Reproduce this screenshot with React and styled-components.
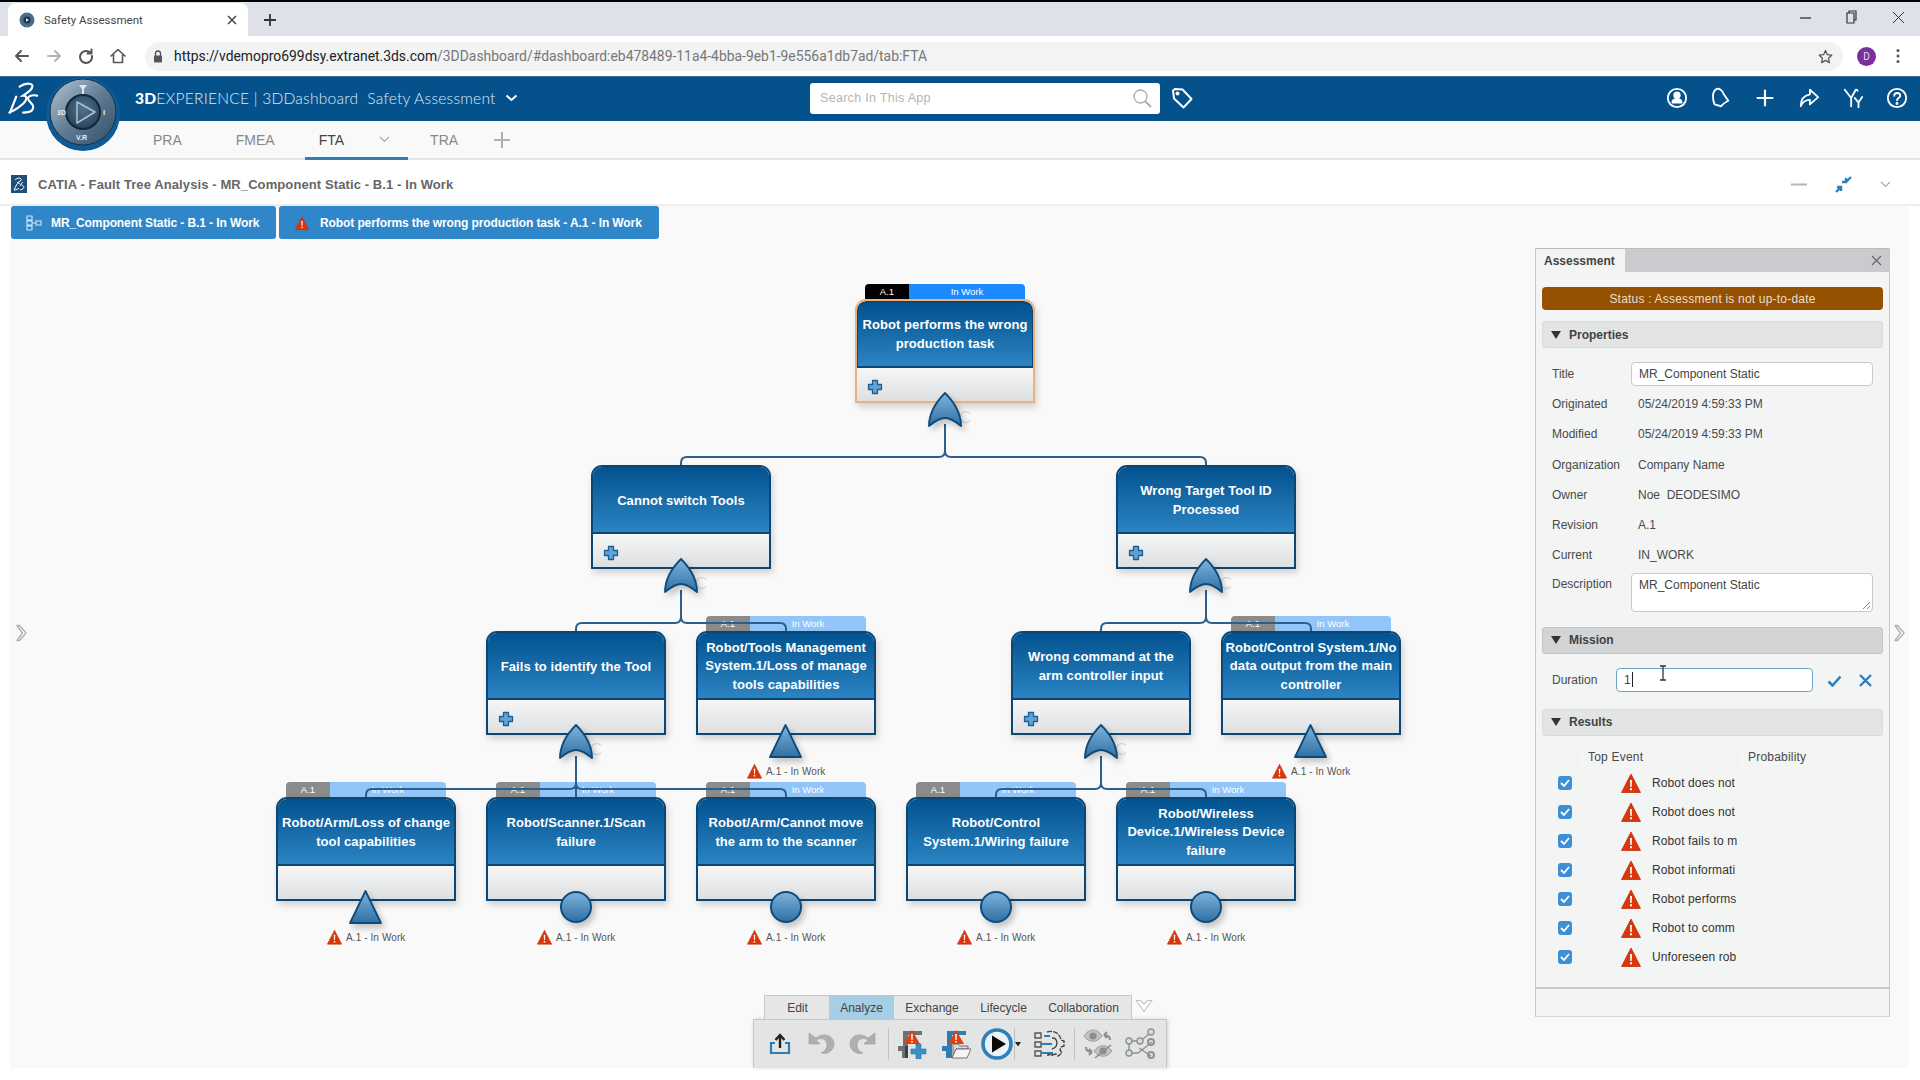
import React from "react";
import styled, { createGlobalStyle } from "styled-components";

const Global = createGlobalStyle`
  html, body { margin: 0; padding: 0; background: #fff; }
  body { font-family: "Liberation Sans", Arial, sans-serif; overflow: hidden; }
  #root { width: 1920px; height: 1080px; }
  * { box-sizing: border-box; }
`;

const Page = styled.div`
  width: 1920px; height: 1080px; display: flex; flex-direction: column; background: #fff; border-top: 2px solid #000; position: relative; overflow: hidden;
`;

/* Browser chrome */
const TabStrip = styled.div`
  height: 34px; background: #dee1e9; display: flex; align-items: stretch; padding: 1px 0 0 8px; position: relative;
`;
const BrowserTab = styled.div`
  width: 240px; background: #fff; border-radius: 8px 8px 0 0; display: flex; align-items: center; padding: 0 10px 0 11px; gap: 9px;
  font: 11.5px Roboto, sans-serif; color: #444;
`;
const TabTitle = styled.span`flex: 1;`;
const NewTab = styled.div`width: 44px; display: flex; align-items: center; justify-content: center; color: #333;`;
const WinControls = styled.div`
  margin-left: auto; display: flex; align-items: center; height: 28px; gap: 35px; padding-right: 15px; color: #333;
`;
const AddressRow = styled.div`
  height: 40px; background: #fff; display: flex; align-items: center; padding: 0 14px 0 14px;
`;
const NavIcons = styled.div`display: flex; gap: 16px; width: 131px; align-items: center; color: #555;`;
const Omnibox = styled.div`
  width: 1698px; height: 29px; border-radius: 15px; background: #f1f3f4; display: flex; align-items: center; padding: 0 10px 0 8px; gap: 8px;
  font: 13.9px Roboto, sans-serif; color: #777; white-space: nowrap;
`;
const UrlHost = styled.span`color: #222;`;
const Url = styled.div`flex: 1; margin-left: 3px;`;
const Avatar = styled.div`
  width: 19px; height: 19px; border-radius: 50%; background: #7b2f9f; color: #ddd; font: 10px Roboto, sans-serif; display: flex; align-items: center; justify-content: center; margin-left: 14px; flex: none;
`;
const Dots = styled.div`margin-left: 20px; display: flex; color: #555;`;

/* 3DX header */
const AppHeader = styled.div`
  height: 45px; background: #04518c; border-top: 1px solid #3a6d94; display: flex; align-items: center; padding: 0 12px 2px 135px; position: relative; color: #fff;
`;
const AppTitle = styled.div`
  width: 675px; font: 300 15.6px Lato, sans-serif; letter-spacing: .22px; color: #dfeaf3; white-space: nowrap; display: flex; align-items: center; gap: 9px;
`;
const Bold3D = styled.b`color: #fff; font-weight: 900;`;
const SearchBox = styled.div`
  width: 350px; height: 31px; border-radius: 3px; background: #fff; display: flex; align-items: center; justify-content: space-between; padding: 0 8px 0 10px;
  font: 12.5px "Liberation Sans", sans-serif; letter-spacing: .3px; color: #b5b5b5; flex: none;
`;
const TagWrap = styled.div`margin-left: 11px; display: flex;`;
const HeaderIcons = styled.div`margin-left: auto; display: flex; gap: 22px; align-items: center;`;
const LogoMark = styled.div`position: absolute; left: 6px; top: 5px;`;
const Compass = styled.svg`position: absolute; left: 45px; top: -1px; z-index: 5;`;

const TabBar = styled.div`
  height: 39px; background: #f9f9f9; border-bottom: 2px solid #e4e4e4; display: flex; align-items: center; padding-left: 153px; font: 14px "Liberation Sans", sans-serif; color: #808080;
`;
const AppTab = styled.div`
  margin-right: ${p => p.$mr}px; height: 39px; display: flex; align-items: center; position: relative;
  color: ${p => (p.$active ? "#444" : "#888")};
  ${p => p.$active && `&::after { content: ""; position: absolute; left: -14px; width: 103px; bottom: -1px; height: 3px; background: #2f7fb8; }`}
`;
const TabChevron = styled.div`width: 86px; padding-right: 6px; display: flex; justify-content: center;`;

const TitleRow = styled.div`
  height: 46px; display: flex; align-items: center; padding: 4px 11px 0; gap: 11px; background: #fff; border-bottom: 2px solid #eee;
`;
const TitleText = styled.div`font: bold 13px "Liberation Sans", sans-serif; color: #666; letter-spacing: .1px; flex: 1; white-space: nowrap;`;
const TitleActions = styled.div`display: flex; gap: 28px; align-items: center; padding-right: 18px;`;

const Workspace = styled.div`
  width: 1899px; margin-left: 10px; height: 862px; background: #f9f9f9; display: flex; position: relative;
`;
const CanvasArea = styled.div`flex: 1; display: flex; flex-direction: column; min-width: 0;`;
const Crumbs = styled.div`display: flex; gap: 3px; padding-left: 1px; height: 33px; flex: none;`;
const Crumb = styled.div`
  height: 33px; width: ${p => p.$w}px; background: #2f86c9; border-radius: 3px; color: #fff; font: bold 12px "Liberation Sans", sans-serif; letter-spacing: -.1px;
  display: flex; align-items: center; padding-left: ${p => p.$pl}px; gap: ${p => p.$gap}px; white-space: nowrap;
`;
const Diagram = styled.div`flex: 1; position: relative;`;
const Wires = styled.svg`position: absolute; left: 0; top: 0; z-index: 2;`;
const SideArrow = styled.svg`position: absolute; top: 418px; z-index: 4; left: ${p => p.$x}px;`;

const Tag = styled.div`
  position: absolute; left: ${p => p.$x}px; top: ${p => p.$y}px; width: 160px; height: 15px; display: flex; z-index: 1; border-radius: 4px 4px 0 0; overflow: hidden;
  font: 9.5px "Liberation Sans", sans-serif; color: #fff; line-height: 15px; text-align: center;
`;
const TagRev = styled.div`width: 44px; background: ${p => (p.$on ? "#000" : "#8b8b8b")};`;
const TagState = styled.div`flex: 1; background: ${p => (p.$on ? "#1a8cff" : "#92c6fb")};`;

const Node = styled.div`
  position: absolute; left: ${p => p.$x}px; top: ${p => p.$y}px; width: 180px; height: 104px; z-index: 3; display: flex; flex-direction: column; overflow: hidden;
  border: 2px solid ${p => (p.$hot ? "#e8b383" : "#0c4673")}; border-radius: 11px 11px 0 0;
  box-shadow: 2px 4px 7px rgba(0,0,0,.16);
`;
const NodeTitle = styled.div`
  height: 67px; flex: none; background: linear-gradient(#02528f, #2c84c2); border-bottom: 2px solid #0c4673; color: #fff;
  font: bold 13px/18.5px "Liberation Sans", sans-serif; letter-spacing: .08px; display: flex; align-items: center; justify-content: center; text-align: center; padding: ${p => (p.$single ? 4 : 2)}px 2px 0;
  ${p => p.$hot && "border-top: 2px solid #0c4673; border-left: 1px solid #0c4673; border-right: 1px solid #0c4673; border-radius: 9px 9px 0 0; padding-top: 0;"}
`;
const NodeFoot = styled.div`flex: 1; background: linear-gradient(#f6f6f6, #dddfe1); padding: 11px 0 0 10px;`;
const Symbol = styled.svg`
  position: absolute; left: ${p => p.$x}px; top: ${p => p.$y}px; z-index: 4; overflow: visible; filter: drop-shadow(3px 4px 3px rgba(0,0,0,.22));
`;
const Spinner = styled.svg`position: absolute; left: ${p => p.$x}px; top: ${p => p.$y}px; z-index: 2;`;
const NodeStatus = styled.div`
  position: absolute; left: ${p => p.$x}px; top: ${p => p.$y}px; z-index: 4; display: flex; align-items: center; gap: 4px;
  font: 10px "Liberation Sans", sans-serif; letter-spacing: .1px; color: #555; white-space: nowrap;
`;

/* Bottom toolbar */
const ActionBar = styled.div`
  position: absolute; left: 743px; bottom: 0; z-index: 6; display: flex; flex-direction: column; align-items: flex-start;
`;
const ActionTabs = styled.div`
  margin-left: 11px; width: 368px; height: 24px; background: #e5e6e6; border: 1px solid #c4c6c8; border-bottom: none; display: flex; padding-left: 1px; position: relative;
  font: 12px "Liberation Sans", sans-serif; color: #444;
`;
const ActionTab = styled.div`
  width: ${p => p.$w}px; display: flex; align-items: center; justify-content: center; background: ${p => (p.$on ? "#a6cee4" : "transparent")};
`;
const ActionChevron = styled.svg`position: absolute; right: -23px; top: 3px;`;
const ActionTools = styled.div`
  width: 414px; height: 49px; background: #e3e4e4; border: 1px solid #c4c6c8; border-bottom: none; box-shadow: 1px 0 4px rgba(0,0,0,.16);
  display: flex; align-items: center; padding-left: 15px;
`;
const ToolIcon = styled.svg`flex: none; margin-right: ${p => p.$mr || 0}px;`;
const ToolSep = styled.div`width: 1px; height: 32px; background: #bfc1c3; flex: none; margin-right: ${p => p.$mr}px;`;

/* Panel */
const Panel = styled.div`
  width: 355px; margin: 42px 19px 0 0; height: 769px; flex: none; border-left: 1px solid #c8c8c8; border-right: 1px solid #c8c8c8; border-bottom: 1px solid #d6d6d6;
  background: #f3f4f4; display: flex; flex-direction: column; font: 12px "Liberation Sans", sans-serif; color: #4a4a4a;
`;
const PanelMain = styled.div`height: 741px; border-bottom: 2px solid #c8c9ca; flex: none; display: flex; flex-direction: column;`;
const PanelHead = styled.div`height: 24px; flex: none; background: #c9cbce; display: flex; align-items: stretch; justify-content: space-between; border-top: 1px solid #bbb;`;
const PanelTab = styled.div`width: 89px; background: #f3f4f4; font-weight: bold; color: #444; display: flex; align-items: center; padding-left: 8px;`;
const PanelClose = styled.div`display: flex; align-items: center; padding-right: 7px;`;
const Status = styled.div`
  height: 23px; margin: 15px 6px 0; background: #955000; border-radius: 4px; color: #eadfce; display: flex; align-items: center; justify-content: center; flex: none; letter-spacing: .2px;
`;
const Section = styled.div`
  height: 27px; flex: none; margin: ${p => p.$mt}px 6px 0; background: ${p => (p.$dark ? "#d2d4d5" : "#e3e5e5")}; border: 1px solid ${p => (p.$dark ? "#c3c5c6" : "#dadcdc")}; border-radius: 3px;
  display: flex; align-items: center; gap: 8px; padding-left: 8px; font-weight: bold; color: #3f4347;
`;
const Triangle = styled.span`width: 0; height: 0; border-left: 5px solid transparent; border-right: 5px solid transparent; border-top: 8px solid #333;`;
const Fields = styled.div`padding: 11px 0 0 16px; flex: none;`;
const FieldRow = styled.div`height: 30.2px; display: flex; align-items: ${p => (p.$top ? "flex-start" : "center")}; ${p => p.$top && "padding-top: 7px;"}`;
const FieldName = styled.div`width: 86px; flex: none;`;
const FieldBox = styled.div`
  width: 242px; height: ${p => p.$h}px; margin-left: -7px; padding: ${p => p.$pt}px 7px 0; background: #fff; border: 1px solid #c9c9c9; border-radius: 4px; color: #444; position: relative; ${p => p.$pull && "margin-top: -4px;"}
`;
const Grip = styled.svg`position: absolute; right: 1px; bottom: 1px;`;
const DurationRow = styled.div`height: 24px; margin: 14px 0 0 16px; display: flex; align-items: center; flex: none; position: relative;`;
const DurationName = styled.div`width: 64px;`;
const DurationBox = styled.div`
  width: 197px; height: 24px; background: #fff; border: 1px solid #6aa5c9; border-radius: 4px; display: flex; align-items: center; padding-left: 7px; color: #444;
`;
const Caret = styled.span`width: 1px; height: 15px; background: #222; margin-left: 1px;`;
const Beam = styled.svg`position: absolute; left: 107px; top: -3px;`;
const DurationActions = styled.div`display: flex; gap: 17px; margin-left: 14px; align-items: center; padding-top: 2px;`;
const ResultHead = styled.div`height: 24px; margin: 9px 0 0 46px; display: flex; align-items: center; flex: none; letter-spacing: .2px;`;
const ResultCol = styled.div`width: ${p => p.$w}px; height: 24px; border-left: 1px solid #f9f9f9; padding-left: 5px; display: flex; align-items: center;`;
const ResultRow = styled.div`height: 29px; display: flex; align-items: center; flex: none; padding-left: 22px;`;
const Check = styled.div`width: 14px; height: 14px; border-radius: 3px; background: #3d8fd6; display: flex; align-items: center; justify-content: center; flex: none; margin-right: 49px;`;
const ResultText = styled.div`width: 86px; margin-left: 11px; overflow: hidden; white-space: nowrap; color: #333; letter-spacing: .12px;`;
const Results = styled.div`flex: none;`;

/* Drawings */
const Warn = ({ w = 15, h = 16 }) => (
  <svg width={w} height={h} viewBox="0 0 20 20" style={{ flex: "none" }}>
    <path d="M10 1 L19.5 19.5 H.5 Z" fill="#d9360c" stroke="#c42f08" strokeWidth=".8" strokeLinejoin="round" />
    <path d="M9 7h2l-.3 7h-1.4z M9 15.2h2v2h-2z" fill="#fff" />
  </svg>
);
const PlusMark = () => (
  <svg width="16" height="16" viewBox="0 0 16 16" style={{ display: "block" }}>
    <path d="M5.5 1.5h5v4h4v5h-4v4h-5v-4h-4v-5h4z" fill="#5fa3d6" stroke="#1d5f92" strokeWidth="1.3" strokeLinejoin="round" />
  </svg>
);
const Grad = ({ id }) => (
  <linearGradient id={id} x1="0" x2="0" y1="0" y2="1">
    <stop offset="0" stopColor="#7db4dd" /><stop offset="1" stopColor="#2f6fa4" />
  </linearGradient>
);
const symbolPath = {
  or: "M16 0 C24 8 32 20 32 33 C26 28 21 25 16 25 C11 25 6 28 0 33 C0 20 8 8 16 0 Z",
  tri: "M15.5 0 L31 32 H0 Z",
};
const Gate = ({ kind, x, y }) => (
  <Symbol $x={x} $y={y} width="32" height="33" viewBox="0 0 32 33">
    <defs><Grad id={`g${kind}${x}${y}`} /></defs>
    {kind === "circle"
      ? <circle cx="16" cy="16" r="15" fill={`url(#g${kind}${x}${y})`} stroke="#0e4a7a" strokeWidth="2" />
      : <path d={symbolPath[kind]} fill={`url(#g${kind}${x}${y})`} stroke="#0e4a7a" strokeWidth="1.8" strokeLinejoin="round" />}
  </Symbol>
);

const OX = 10, OY = 240;
const nodes = [
  { x: 855, y: 300, t: "Robot performs the wrong production task", hot: true, plus: true, tag: true, on: true, gate: "or" },
  { x: 591, y: 466, t: "Cannot switch Tools", plus: true, gate: "or", single: true },
  { x: 1116, y: 466, t: "Wrong Target Tool ID Processed", plus: true, gate: "or" },
  { x: 486, y: 632, t: "Fails to identify the Tool", plus: true, gate: "or", single: true },
  { x: 696, y: 632, t: "Robot/Tools Management System.1/Loss of manage tools capabilities", tag: true, gate: "tri", st: true },
  { x: 1011, y: 632, t: "Wrong command at the arm\u00a0controller\u00a0input", plus: true, gate: "or" },
  { x: 1221, y: 632, t: "Robot/Control System.1/No data output from the main controller", tag: true, gate: "tri", st: true },
  { x: 276, y: 798, t: "Robot/Arm/Loss of change tool capabilities", tag: true, gate: "tri", st: true },
  { x: 486, y: 798, t: "Robot/Scanner.1/Scan failure", tag: true, gate: "circle", st: true },
  { x: 696, y: 798, t: "Robot/Arm/Cannot move the arm to the scanner", tag: true, gate: "circle", st: true },
  { x: 906, y: 798, t: "Robot/Control System.1/Wiring failure", tag: true, gate: "circle", st: true },
  { x: 1116, y: 798, t: "Robot/Wireless Device.1/Wireless Device failure", tag: true, gate: "circle", st: true },
];

const fork = (cx, y0, ym, yEnd, kids) =>
  kids.map(k => {
    const d = k < cx ? -1 : 1;
    if (k === cx) return `M${cx} ${y0}V${yEnd}`;
    return `M${cx} ${y0}V${ym - 6}Q${cx} ${ym} ${cx + 6 * d} ${ym}H${k - 6 * d}Q${k} ${ym} ${k} ${ym + 6}V${yEnd}`;
  }).join("");

const wirePaths = [
  fork(945, 425, 458, 467, [681, 1206]),
  fork(681, 591, 624, 633, [576, 786]),
  fork(1206, 591, 624, 633, [1101, 1311]),
  fork(576, 757, 790, 799, [366, 576, 786]),
  fork(1101, 757, 790, 799, [996, 1206]),
];

const DSLogo = () => (
  <svg width="34" height="34" viewBox="0 0 30 30" style={{ display: "block" }}>
    <path d="M12 4 C18 0 25 1 23 5 C22 8 18 10 15 12 C18 12 19 14 17 17 C15 20 8 25 3 27 M9 13 L3.500 27 M27.500 12 C22 11 18 13 20 16 C22 19 26 21 23 25 C21 27 17 27 15 27"
      fill="none" stroke="#fff" strokeWidth="1.900" strokeLinecap="round" />
  </svg>
);

const CompassLogo = () => (
  <Compass width="76" height="76" viewBox="0 0 76 76">
    <defs>
      <linearGradient id="cmpRing" x1="0" y1="0" x2="1" y2="1">
        <stop offset="0" stopColor="#b6c8d6" /><stop offset=".5" stopColor="#5f7c93" /><stop offset="1" stopColor="#2f4d66" />
      </linearGradient>
      <radialGradient id="cmpIn" cx=".5" cy=".4" r=".7">
        <stop offset="0" stopColor="#54748e" /><stop offset="1" stopColor="#20394f" />
      </radialGradient>
    </defs>
    <circle cx="38" cy="38" r="37" fill="#0d5a96" />
    <circle cx="38" cy="36" r="33" fill="url(#cmpRing)" stroke="#1c3146" strokeWidth="1" />
    <circle cx="38" cy="36" r="17" fill="url(#cmpIn)" stroke="#13273a" strokeWidth="2" />
    <path d="M32 26 L50 36 L32 47 Z" fill="none" stroke="#a8c4d9" strokeWidth="1.5" strokeLinejoin="round" />
    <path d="M34 9h8l-3 4v5h-2v-5z" fill="#dfe8ef" />
    <text x="12" y="39" fontFamily="Liberation Sans" fontWeight="bold" fontSize="7" fill="#e8eef3">3D</text>
    <text x="58" y="39" fontFamily="Liberation Sans" fontWeight="bold" fontSize="8" fill="#e8eef3">i</text>
    <text x="31" y="64" fontFamily="Liberation Sans" fontWeight="bold" fontSize="7" fill="#e8eef3">V.R</text>
  </Compass>
);

const W = ({ children, s = 22, v = "0 0 24 24", ...r }) => (
  <svg width={s} height={s} viewBox={v} fill="none" stroke="#fff" strokeWidth="2" strokeLinecap="round" strokeLinejoin="round" style={{ display: "block" }} {...r}>{children}</svg>
);

const fields = [
  ["Originated", "05/24/2019 4:59:33 PM"],
  ["Modified", "05/24/2019 4:59:33 PM"],
  ["Organization", "Company Name"],
  ["Owner", "Noe\u00a0 DEODESIMO"],
  ["Revision", "A.1"],
  ["Current", "IN_WORK"],
];
const results = ["Robot does not", "Robot does not", "Robot fails to m", "Robot informati", "Robot performs", "Robot to comm", "Unforeseen rob"];

const G = "#adafb1";
const Toolbar = () => (
  <ActionTools>
    <ToolIcon $mr={16} width="22" height="24" viewBox="0 0 22 24">
      <path d="M6 11H2v10h18V11h-4" fill="none" stroke="#2e7db3" strokeWidth="2.2" />
      <path d="M11 16V4M6.5 8 11 3l4.5 5" fill="none" stroke="#222" strokeWidth="2.4" />
    </ToolIcon>
    <ToolIcon $mr={14} width="28" height="28" viewBox="0 0 28 28">
      <path d="M2 3v11h11l-4-4c5-3 11-1 11 5 0 4-3 7-6 8 7 2 13-3 13-9 0-9-11-12-18-6z" fill={G} stroke="#9a9c9e" strokeWidth=".6" />
    </ToolIcon>
    <ToolIcon $mr={11} width="28" height="28" viewBox="0 0 28 28">
      <path d="M26 3v11H15l4-4c-5-3-11-1-11 5 0 4 3 7 6 8-7 2-13-3-13-9 0-9 11-12 18-6z" fill={G} stroke="#9a9c9e" strokeWidth=".6" />
    </ToolIcon>
    <ToolSep $mr={8} />
    <ToolIcon $mr={14} width="30" height="30" viewBox="0 0 30 30">
      <path d="M1 17h5V2h19v4H11v23H5v-7H1z" fill="#6f7071" />
      <path d="M8 29V17h3v12z" fill="#3f4041" />
      <path d="M15 1 L23 15 H7Z" fill="#e0400f" /><path d="M14.2 5h1.6l-.2 6h-1.2z M14.2 12h1.6v1.6h-1.6z" fill="#fff" />
      <path d="M19 15h5v5h5v5h-5v5h-5v-5h-5v-5h5z" fill="#3d8fca" stroke="#2a73a6" strokeWidth=".6" />
    </ToolIcon>
    <ToolIcon $mr={10} width="30" height="30" viewBox="0 0 30 30">
      <path d="M1 17h5V2h19v4H11v23H5v-7H1z" fill="#2f7db5" />
      <path d="M15 1 L23 15 H7Z" fill="#e0400f" /><path d="M14.2 5h1.6l-.2 6h-1.2z M14.2 12h1.6v1.6h-1.6z" fill="#fff" />
      <path d="M12 15h5l2 2h8v3H15l-3 9z" fill="#d8d8d8" stroke="#555" strokeWidth=".8" />
      <path d="M15 20h15l-4 9H11z" fill="#f5f5f5" stroke="#555" strokeWidth=".8" />
    </ToolIcon>
    <ToolIcon $mr={1} width="32" height="32" viewBox="0 0 32 32">
      <circle cx="16" cy="16" r="14" fill="#eaf2f8" stroke="#2f7fb8" strokeWidth="3.6" />
      <path d="M11 7.5 L25 16 L11 24.5Z" fill="#0a0a0a" />
    </ToolIcon>
    <ToolSep $mr={-1} />
    <ToolIcon $mr={11} width="8" height="8" viewBox="0 0 8 8">
      <path d="M1 2h6L4 6.5z" fill="#222" />
    </ToolIcon>
    <ToolIcon $mr={9} width="32" height="30" viewBox="0 0 32 30">
      <path d="M2 4h6v5H2zM2 13h6v5H2zM2 22h6v5H2z" fill="none" stroke="#555" strokeWidth="1.4" />
      <path d="M11 7h6M8 15h11M8 24h12M15 24v3M19 24v3" stroke="#2e7db3" strokeWidth="2" />
      <path d="M14 3c6-2 13 1 14 8l3 1v5l-3 1-1 3 2 3-4 3-2-2c-3 1-6 1-8 0" fill="none" stroke="#444" strokeWidth="1.4" strokeDasharray="5 1.2" />
      <path d="M19 9c6-1 7 9 0 11" fill="none" stroke="#444" strokeWidth="1.4" />
    </ToolIcon>
    <ToolSep $mr={8} />
    <ToolIcon $mr={12} width="30" height="32" viewBox="0 0 30 32">
      <path d="M1 8c5-8 13-8 18 0-5 7-13 7-18 0z" fill="#bfc1c3" stroke="#9a9c9e" /><circle cx="10" cy="8" r="3.5" fill="#8b8d8f" />
      <path d="M27 12c0-4-3-5-6-5M21 7l3-3M21 7l3 3" stroke="#8b8d8f" strokeWidth="2" fill="none" />
      <path d="M11 23c5-7 13-7 18 0-5 7-13 7-18 0z" fill="#bfc1c3" stroke="#9a9c9e" /><circle cx="20" cy="23" r="3.5" fill="#8b8d8f" />
      <path d="M12 30 28 17" stroke="#8b8d8f" strokeWidth="1.6" />
      <path d="M3 19c0 4 3 5 6 5M9 24l-3-3M9 24l-3 3" stroke="#8b8d8f" strokeWidth="2" fill="none" />
    </ToolIcon>
    <ToolIcon width="30" height="32" viewBox="0 0 30 32">
      <g fill="#dcdddd" stroke="#8f9193" strokeWidth="1.4">
        <circle cx="4" cy="13" r="3" /><circle cx="4" cy="25" r="3" /><circle cx="15" cy="13" r="3" /><circle cx="26" cy="4" r="3" />
      </g>
      <path d="M7 13h5M18 11l6-5M4 16v6M7 25h6L27 14M14 20l12 8" stroke="#8f9193" strokeWidth="1.4" fill="none" />
      <circle cx="26" cy="14" r="3" fill="none" stroke="#8f9193" strokeWidth="2" /><circle cx="26" cy="27" r="3" fill="none" stroke="#8f9193" strokeWidth="2" />
    </ToolIcon>
  </ActionTools>
);

export default function App() {
  return (
    <Page>
      <Global />
      <TabStrip>
        <BrowserTab>
          <svg width="16" height="16" viewBox="0 0 16 16" style={{ flex: "none" }}>
            <circle cx="8" cy="8" r="7.5" fill="#4a6d8a" /><circle cx="8" cy="8" r="3.5" fill="#1c3347" /><path d="M7 6l3 2-3 2z" fill="#cfe0ec" />
          </svg>
          <TabTitle>Safety Assessment</TabTitle>
          <svg width="12" height="12" viewBox="0 0 12 12"><path d="M2 2l8 8M10 2l-8 8" stroke="#444" strokeWidth="1.5" /></svg>
        </BrowserTab>
        <NewTab>
          <svg width="14" height="14" viewBox="0 0 14 14"><path d="M7 1v12M1 7h12" stroke="#333" strokeWidth="1.8" /></svg>
        </NewTab>
        <WinControls>
          <svg width="11" height="11" viewBox="0 0 11 11"><path d="M0 6h11" stroke="#333" strokeWidth="1.3" /></svg>
          <svg width="11" height="14" viewBox="0 0 11 14"><path d="M3 3V1h7v9H8M1 3h7v10H1z" fill="none" stroke="#333" strokeWidth="1.2" /></svg>
          <svg width="13" height="13" viewBox="0 0 13 13"><path d="M1 1l11 11M12 1L1 12" stroke="#333" strokeWidth="1" /></svg>
        </WinControls>
      </TabStrip>
      <AddressRow>
        <NavIcons>
          <W s={16} v="0 0 16 16" stroke="#555"><path d="M14 8H2M7 3 2 8l5 5" /></W>
          <W s={16} v="0 0 16 16" stroke="#b5b5b5"><path d="M2 8h12M9 3l5 5-5 5" /></W>
          <W s={16} v="0 0 16 16" stroke="#555"><path d="M13 5.5A6 6 0 1 0 14 8M13.5 1.5v4h-4" /></W>
          <W s={16} v="0 0 16 16" stroke="#555" strokeWidth="1.6"><path d="M1 8l7-6.5L15 8M3.5 7v7.5h9V7" /></W>
        </NavIcons>
        <Omnibox>
          <svg width="10" height="13" viewBox="0 0 10 13" style={{ flex: "none" }}>
            <path d="M2.5 6V3.5a2.5 2.5 0 0 1 5 0V6" fill="none" stroke="#555" strokeWidth="1.3" /><rect x="1" y="5.5" width="8" height="7" rx="1" fill="#555" />
          </svg>
          <Url><UrlHost>https://vdemopro699dsy.extranet.3ds.com</UrlHost>/3DDashboard/#dashboard:eb478489-11a4-4bba-9eb1-9e556a1db7ad/tab:FTA</Url>
          <svg width="15" height="15" viewBox="0 0 24 24" style={{ flex: "none" }}>
            <path d="M12 2.5l3 6.6 7 .8-5.200 4.800 1.400 7.100-6.200-3.600-6.200 3.600 1.400-7.100L2 9.900l7-.8z" fill="none" stroke="#555" strokeWidth="2" strokeLinejoin="round" />
          </svg>
        </Omnibox>
        <Avatar>D</Avatar>
        <Dots>
          <svg width="4" height="16" viewBox="0 0 4 16"><circle cx="2" cy="2.500" r="1.500" fill="#555" /><circle cx="2" cy="8" r="1.500" fill="#555" /><circle cx="2" cy="13.500" r="1.500" fill="#555" /></svg>
        </Dots>
      </AddressRow>
      <AppHeader>
        <LogoMark><DSLogo /></LogoMark>
        <CompassLogo />
        <AppTitle>
          <span><Bold3D>3D</Bold3D>EXPERIENCE | 3DDashboard&nbsp; Safety Assessment</span>
          <svg width="13" height="8" viewBox="0 0 13 8"><path d="M1.500 1.500l5 4.500 5-4.500" fill="none" stroke="#fff" strokeWidth="2" /></svg>
        </AppTitle>
        <SearchBox>
          Search In This App
          <svg width="20" height="20" viewBox="0 0 20 20"><circle cx="8.500" cy="8.500" r="6.500" fill="none" stroke="#aaa" strokeWidth="1.300" /><path d="M13 13l6 6" stroke="#aaa" strokeWidth="1.800" /></svg>
        </SearchBox>
        <TagWrap>
          <W s={22} v="0 0 22 22"><path d="M2 3.500 4 2l7.500.500 9 9.500-8 8.500-9.500-9z" /><circle cx="6.500" cy="6.500" r="1" /></W>
        </TagWrap>
        <HeaderIcons>
          <W><circle cx="12" cy="12" r="10" /><circle cx="12" cy="9" r="3" fill="#fff" /><path d="M7 17c0-5 10-5 10 0z" fill="#fff" /></W>
          <W><path d="M6 3c4-3 8 1 9 5l5 7c-3 1-6 4-8 6l-7-2C3 14 2 6 6 3z" /></W>
          <W><path d="M12 3v18M3 12h18" strokeWidth="2.400" strokeLinecap="butt" /></W>
          <W><path d="M13 3l9 8-9 8v-5c-5 0-8 2-10 7 0-8 4-12 10-13z" fill="none" /></W>
          <W><path d="M3 3l7 9v9M15 3l-5 9M14 12l4 5v5M22 11l-4 6M16 3l1 1" strokeWidth="2" /></W>
          <W><circle cx="12" cy="12" r="10" /><path d="M9 9.500c0-4 6.500-4 6.500 0 0 2.500-3.500 2.500-3.500 5" /><circle cx="12" cy="18" r=".6" /></W>
        </HeaderIcons>
      </AppHeader>
      <TabBar>
        <AppTab $mr={54}>PRA</AppTab>
        <AppTab $mr={44}>FMEA</AppTab>
        <AppTab $mr={0} $active>FTA</AppTab>
        <TabChevron><svg width="11" height="7" viewBox="0 0 11 7"><path d="M1 1l4.500 4.500L10 1" fill="none" stroke="#aaa" strokeWidth="1.200" /></svg></TabChevron>
        <AppTab $mr={36}>TRA</AppTab>
        <svg width="16" height="16" viewBox="0 0 16 16"><path d="M8 0v16M0 8h16" stroke="#b0b0b0" strokeWidth="2" /></svg>
      </TabBar>
      <TitleRow>
        <svg width="16" height="18" viewBox="0 0 16 18" style={{ flex: "none" }}>
          <rect width="16" height="18" fill="#1d4f78" />
          <path d="M4 5c3-3 7-2 6 0s-3 2-4 3c3 0 4 1 3 3M3 15l3-6M3 15c2 0 4-1 5-2M12 7c-2 1-2 3 0 4s1 3-3 4" fill="none" stroke="#fff" strokeWidth="1" />
        </svg>
        <TitleText>CATIA - Fault Tree Analysis - MR_Component Static - B.1 - In Work</TitleText>
        <TitleActions>
          <svg width="16" height="3" viewBox="0 0 16 3"><path d="M0 1.500h16" stroke="#b5b5b5" strokeWidth="2" /></svg>
          <svg width="17" height="17" viewBox="0 0 17 17"><path d="M16 1l-5 5M7 6h4V2M1 16l5-5M6 15v-4H2" fill="none" stroke="#2f7fb8" strokeWidth="2.400" /></svg>
          <svg width="11" height="7" viewBox="0 0 11 7"><path d="M1 1l4.500 4.500L10 1" fill="none" stroke="#aaa" strokeWidth="1.200" /></svg>
        </TitleActions>
      </TitleRow>
      <Workspace>
        <CanvasArea>
          <Crumbs>
            <Crumb $w={265} $pl={15} $gap={9}>
              <svg width="16" height="16" viewBox="0 0 16 16" style={{ flex: "none" }}>
                <path d="M1 1h5v4H1zM1 6h5v4H1zM1 11h5v4H1zM10 6h5v4h-5zM6 8h4" fill="none" stroke="#d6e6f3" strokeWidth="1.100" />
              </svg>
              MR_Component Static - B.1 - In Work
            </Crumb>
            <Crumb $w={380} $pl={16} $gap={11}>
              <Warn w={14} h={16} />
              Robot performs the wrong production task - A.1 - In Work
            </Crumb>
          </Crumbs>
          <Diagram>
            <Wires width="1530" height="830">
              <path d={wirePaths.join("")} transform={`translate(${-OX} ${-OY})`} fill="none" stroke="#2d5f8a" strokeWidth="2" />
            </Wires>
            {nodes.map(n => {
              const cx = n.x + 90, by = n.y + 104;
              const gateX = cx - 16 - OX;
              const gateY = by - 10 - OY;
              return (
                <React.Fragment key={n.t}>
                  {n.tag && (
                    <Tag $x={n.x + 10 - OX} $y={n.y - 15 - OY}>
                      <TagRev $on={n.on}>A.1</TagRev>
                      <TagState $on={n.on}>In Work</TagState>
                    </Tag>
                  )}
                  <Node $x={n.x - OX} $y={n.y - OY} $hot={n.hot}>
                    <NodeTitle $hot={n.hot} $single={n.single}>{n.t}</NodeTitle>
                    <NodeFoot>{n.plus && <PlusMark />}</NodeFoot>
                  </Node>
                  <Gate kind={n.gate} x={gateX} y={gateY} />
                  {n.gate === "or" && (
                    <Spinner $x={cx + 14 - OX} $y={by + 7 - OY} width="14" height="14" viewBox="0 0 14 14">
                      <path d="M11 3.500A5.500 5.500 0 1 0 11 10.500" fill="none" stroke="#dcdcdc" strokeWidth="1.500" />
                    </Spinner>
                  )}
                  {n.st && (
                    <NodeStatus $x={cx - 39 - OX} $y={by + 28 - OY}>
                      <Warn />A.1 - In Work
                    </NodeStatus>
                  )}
                </React.Fragment>
              );
            })}
          </Diagram>
          <SideArrow $x={4} width="14" height="18" viewBox="0 0 14 18">
            <path d="M3 1.500h2.500L12 9l-6.500 7.500H3L8.500 9z" fill="#fff" stroke="#aeaeae" strokeWidth="1.300" strokeLinejoin="round" />
          </SideArrow>
          <ActionBar>
            <ActionTabs>
              <ActionTab $w={63}>Edit</ActionTab>
              <ActionTab $w={65} $on>Analyze</ActionTab>
              <ActionTab $w={76}>Exchange</ActionTab>
              <ActionTab $w={67}>Lifecycle</ActionTab>
              <ActionTab $w={93}>Collaboration</ActionTab>
              <ActionChevron width="20" height="14" viewBox="0 0 20 14">
                <path d="M2 1.500h4.500L10 5l3.500-3.500H18L10 12.500z" fill="#fff" stroke="#c4c4c4" strokeWidth="1.200" strokeLinejoin="round" />
              </ActionChevron>
            </ActionTabs>
            <Toolbar />
          </ActionBar>
        </CanvasArea>
        <Panel>
          <PanelMain>
            <PanelHead>
              <PanelTab>Assessment</PanelTab>
              <PanelClose>
                <svg width="11" height="11" viewBox="0 0 11 11"><path d="M1 1l9 9M10 1l-9 9" stroke="#666" strokeWidth="1.200" /></svg>
              </PanelClose>
            </PanelHead>
            <Status>Status : Assessment is not up-to-date</Status>
            <Section $mt={11}><Triangle />Properties</Section>
            <Fields>
              <FieldRow><FieldName>Title</FieldName><FieldBox $h={24} $pt={4}>MR_Component Static</FieldBox></FieldRow>
              {fields.map(([k, v]) => (
                <FieldRow key={k}><FieldName>{k}</FieldName><div>{v}</div></FieldRow>
              ))}
              <FieldRow $top>
                <FieldName>Description</FieldName>
                <FieldBox $h={39} $pt={4} $pull>
                  MR_Component Static
                  <Grip width="9" height="9" viewBox="0 0 9 9"><path d="M8 1 1 8M8 5 5 8" stroke="#888" /></Grip>
                </FieldBox>
              </FieldRow>
            </Fields>
            <Section $mt={26} $dark><Triangle />Mission</Section>
            <DurationRow>
              <DurationName>Duration</DurationName>
              <DurationBox>1<Caret /></DurationBox>
              <Beam width="8" height="16" viewBox="0 0 8 16"><path d="M1 1h6M4 1v14M1 15h6" stroke="#333" strokeWidth="1.300" /></Beam>
              <DurationActions>
                <svg width="15" height="12" viewBox="0 0 15 12"><path d="M1.500 6.500l4 4 8-9" fill="none" stroke="#2f7fb8" strokeWidth="2.600" /></svg>
                <svg width="13" height="13" viewBox="0 0 13 13"><path d="M1 1l11 11M12 1L1 12" stroke="#2f7fb8" strokeWidth="2.400" /></svg>
              </DurationActions>
            </DurationRow>
            <Section $mt={17}><Triangle />Results</Section>
            <ResultHead>
              <ResultCol $w={160}>Top Event</ResultCol>
              <ResultCol $w={120}>Probability</ResultCol>
            </ResultHead>
            <Results>
              {results.map((r, i) => (
                <ResultRow key={i}>
                  <Check><svg width="10" height="8" viewBox="0 0 10 8"><path d="M1 4l3 3 5-6" fill="none" stroke="#fff" strokeWidth="1.800" /></svg></Check>
                  <Warn w={20} h={20} />
                  <ResultText>{r}</ResultText>
                </ResultRow>
              ))}
            </Results>
          </PanelMain>
        </Panel>
        <SideArrow $x={1882} width="14" height="18" viewBox="0 0 14 18">
          <path d="M3 1.500h2.500L12 9l-6.500 7.500H3L8.500 9z" fill="#fff" stroke="#aeaeae" strokeWidth="1.300" strokeLinejoin="round" />
        </SideArrow>
      </Workspace>
    </Page>
  );
}
